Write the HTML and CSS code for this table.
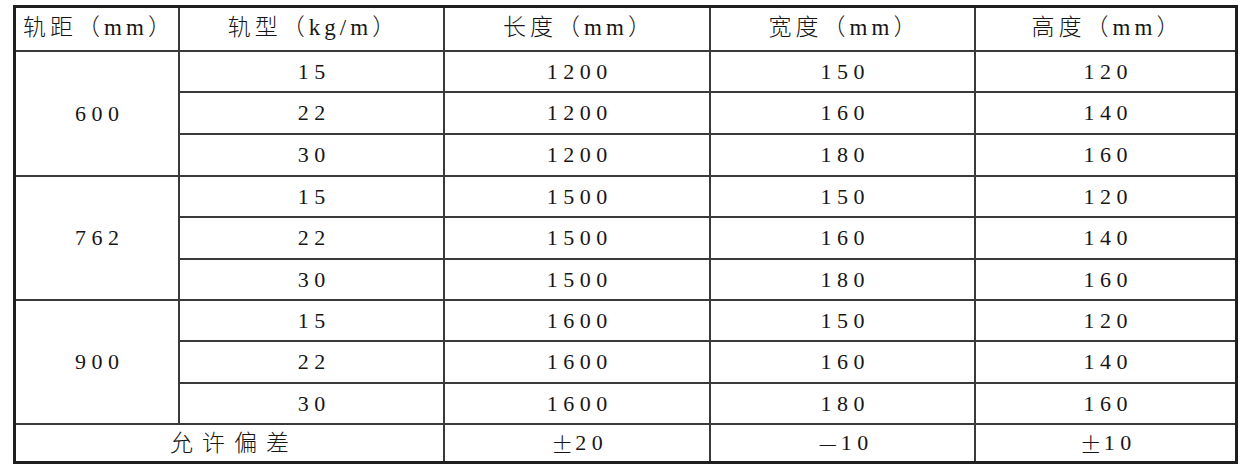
FILE: index.html
```html
<!DOCTYPE html>
<html lang="zh-CN">
<head>
<meta charset="utf-8">
<title>轨枕尺寸</title>
<link rel="stylesheet" href="styles.css">
</head>
<body>
<div class="table">
  <div class="cell head">轨距（mm）</div>
  <div class="cell head">轨型（kg/m）</div>
  <div class="cell head">长度（mm）</div>
  <div class="cell head">宽度（mm）</div>
  <div class="cell head">高度（mm）</div>

  <div class="cell span3">600</div>
  <div class="cell">15</div><div class="cell">1200</div><div class="cell">150</div><div class="cell">120</div>
  <div class="cell">22</div><div class="cell">1200</div><div class="cell">160</div><div class="cell">140</div>
  <div class="cell">30</div><div class="cell">1200</div><div class="cell">180</div><div class="cell">160</div>

  <div class="cell span3">762</div>
  <div class="cell">15</div><div class="cell">1500</div><div class="cell">150</div><div class="cell">120</div>
  <div class="cell">22</div><div class="cell">1500</div><div class="cell">160</div><div class="cell">140</div>
  <div class="cell">30</div><div class="cell">1500</div><div class="cell">180</div><div class="cell">160</div>

  <div class="cell span3">900</div>
  <div class="cell">15</div><div class="cell">1600</div><div class="cell">150</div><div class="cell">120</div>
  <div class="cell">22</div><div class="cell">1600</div><div class="cell">160</div><div class="cell">140</div>
  <div class="cell">30</div><div class="cell">1600</div><div class="cell">180</div><div class="cell">160</div>

  <div class="cell span2 wide">允许偏差</div>
  <div class="cell"><span class="fw">±</span>20</div>
  <div class="cell"><span class="fw">－</span>10</div>
  <div class="cell"><span class="fw">±</span>10</div>
</div>
</body>
</html>
```

FILE: styles.css
```css
html, body {
  margin: 0;
  padding: 0;
  background: #ffffff;
}

body {
  padding: 5px 0 0 13px;
  font-family: "Liberation Serif", "Noto Sans CJK SC", serif;
  color: #161616;
}

.table {
  width: 1219px;
  border: 3px solid #1f1f1f;
  display: grid;
  grid-template-columns: 162px 263px 264px 263px 259px;
  grid-template-rows: 42px 39px 40px 40px 39px 40px 39px 39px 40px 39px 36px;
  gap: 2px;
  background: #3a3a3a;
}

.cell {
  background: #ffffff;
  display: flex;
  align-items: center;
  justify-content: center;
  font-size: 22px;
  letter-spacing: 5.5px;
  padding-left: 5.5px;
  line-height: 1;
}

.head {
  font-size: 23px;
  font-weight: 300;
  letter-spacing: 4px;
  padding-left: 4px;
  padding-bottom: 4px;
}

.span3 {
  grid-row: span 3;
}

.span2 {
  grid-column: span 2;
}

.wide {
  font-size: 23px;
  font-weight: 300;
  letter-spacing: 9px;
  padding-left: 9px;
}

.fw {
  font-family: "Noto Sans CJK SC", sans-serif;
  font-weight: 300;
  letter-spacing: 2px;
}
```
